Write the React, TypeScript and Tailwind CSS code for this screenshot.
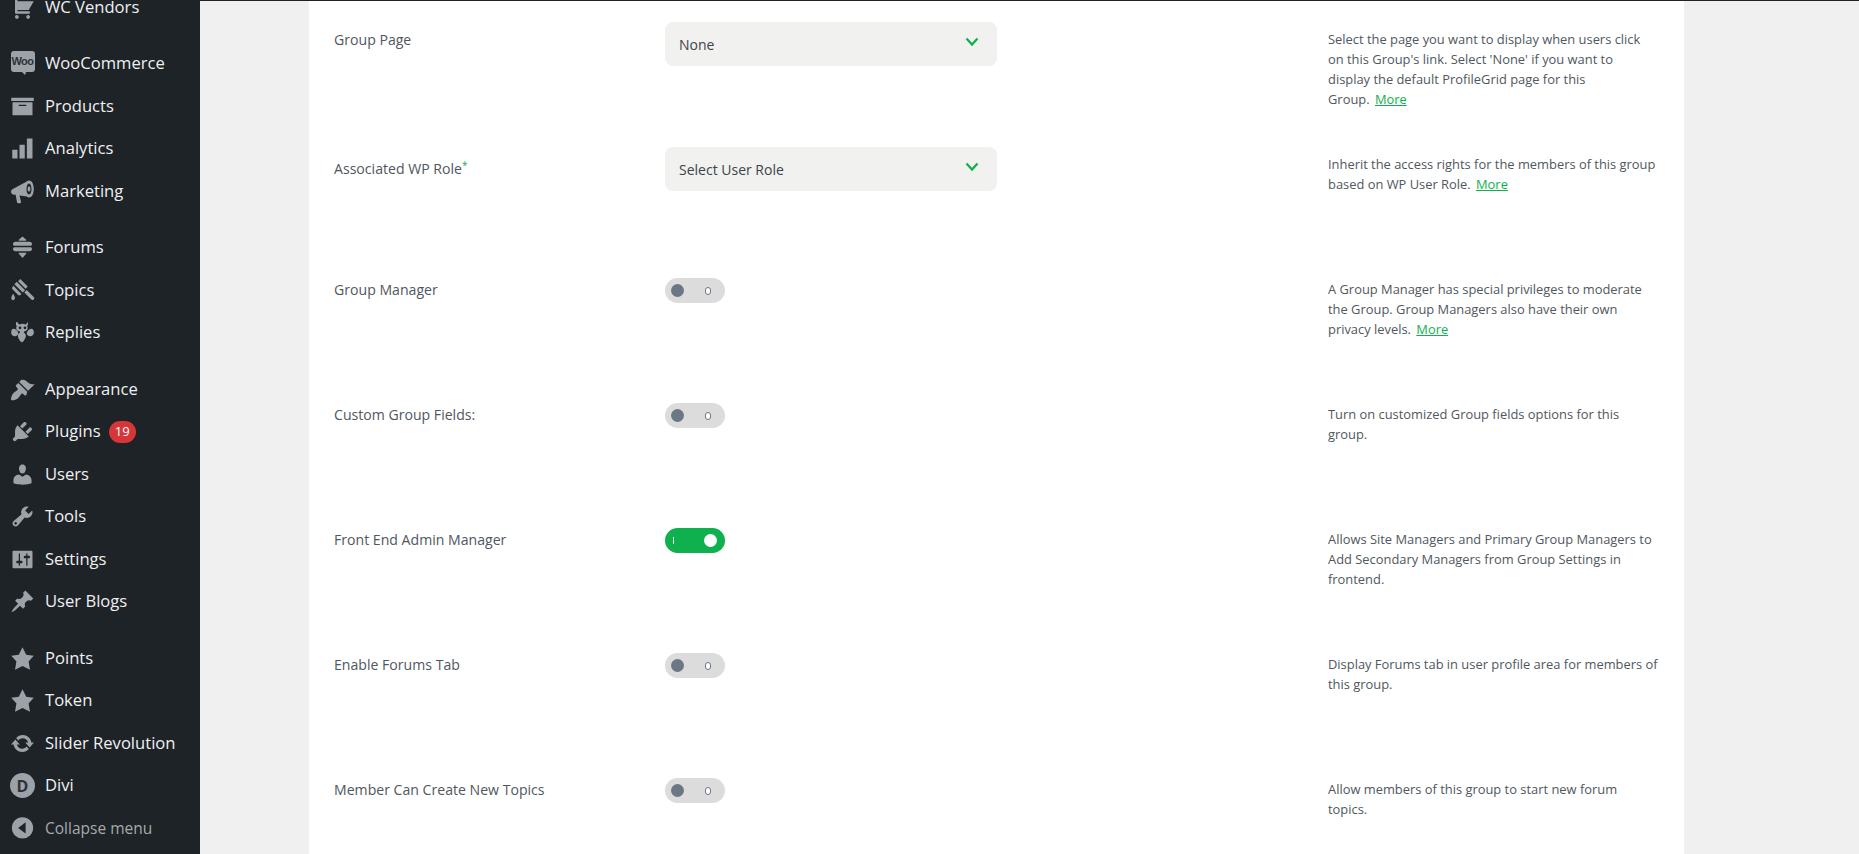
import React from "react";

const Ico = ({ d, rule }: { d: string; rule?: "evenodd" }) => (
  <svg viewBox="0 0 20 20" className="w-[25px] h-[25px] fill-[#9ca2a7]">
    <path d={d} fillRule={rule} clipRule={rule} />
  </svg>
);

const paths: Record<string, string> = {
  cart: "M6 13h9c.55 0 1 .45 1 1s-.45 1-1 1H5c-.55 0-1-.45-1-1V4H2c-.55 0-1-.45-1-1s.45-1 1-1h3c.55 0 1 .45 1 1v2h13l-4 7H6v1zm-.5 3c.83 0 1.5.67 1.5 1.5S6.33 19 5.5 19 4 18.33 4 17.5 4.67 16 5.5 16zm9 0c.83 0 1.5.67 1.5 1.500s-.67 1.500-1.500 1.500-1.500-.67-1.500-1.500.67-1.500 1.500-1.500z",
  archive: "M19 3v2.500H1V3h18zM2 6.500h16V17H2V6.500zm11 3V8.600H7v.9h6z",
  bars: "M18 18V2h-4.500v16H18zm-6.200 0V7H7.600v11h4.200zM6 18v-7H1.800v7H6z",
  mega: "M15.200 1.200c-.7 0-1.300.3-1.800.8L1.900 8.200C.9 8.800.7 10 1 11c.3 1 1.200 1.600 2.300 1.600h1.200l1.100 6c.1.500.5.700.9.700h1.500c.6 0 1-.5.8-1.100l-1.200-5 5.800.8c.5.500 1.100.7 1.800.7 2.200 0 3.800-2.800 3.800-6.800s-1.600-6.700-3.800-6.700zm0 2.300c1.200 0 2 2 2 4.400s-.8 4.400-2 4.400-2-2-2-4.400.8-4.400 2-4.400zm0 2.300c-.7 0-1.100 1-1.100 2.100s.4 2.100 1.100 2.100 1.100-1 1.100-2.100-.4-2.100-1.100-2.100z",
  forums: "M10 1.200l3 2.600c.2.300 0 .7-.4.700H7.400c-.4 0-.6-.4-.4-.7zM4.300 5.300h11.400c1.100 0 1.900.8 1.900 1.800 0 .7-.4 1.300-1 1.500H3.400c-.6-.2-1-.8-1-1.500 0-1 .8-1.800 1.900-1.800zM3.300 9.800h13.400c.5.300.9.800.9 1.400 0 1-.8 1.800-1.900 1.800H4.300c-1.100 0-1.900-.8-1.900-1.800 0-.6.4-1.100.9-1.400zM7.400 14.200h5.200c.4 0 .6.400.4.700l-3 3.400-3-3.400c-.2-.3 0-.7.400-.7z",
  topics: "M8.200.8l6 6-1.700 1.700-6-6zM5.400 3l6.700 6.700-1.900 1.900-6.700-6.700zM2.700 6.200l6.500 6.500-.9.9c-.5.500-1.300.5-1.800 0L2 8.900c-.5-.5-.5-1.300 0-1.800zM11.400 11.600l2-2 5.600 5.600c.6.600.6 1.400.1 1.900l-.1.100c-.5.500-1.300.5-1.900-.1zM2.500 12.500c.7 1.200 1.500 2.300 1.500 3.500 0 1-.7 1.700-1.500 1.700S1 17 1 16c0-1.200.8-2.300 1.500-3.500z",
  bee: "M5.800 1.500c.5 1 1.100 1.600 1.800 2 .7-.4 1.500-.6 2.400-.6s1.700.2 2.400.6c.7-.4 1.300-1 1.800-2 .4 1.300.2 2.400-.5 3.400.3.500.5 1 .5 1.500 0 1.300-1.200 2.400-3 2.800l-.1.700h-.1c1.100.8 1.700 1.600 1.700 2.700 0 1.900-2 4.900-3.200 5.200-1.200-.3-3.200-3.300-3.200-5.200 0-1.100.6-1.900 1.700-2.700l-.1-.7c-1.800-.4-3-1.500-3-2.800 0-.5.200-1 .5-1.500-.7-1-.9-2.100-.4-3.400zM8 5.100a1.100 1.100 0 1 0 0 2.200 1.100 1.100 0 0 0 0-2.200zm4 0a1.100 1.100 0 1 0 0 2.200 1.100 1.100 0 0 0 0-2.200zM2.900 7c1.300 0 2.200.7 3.100 2 .5.700.6 1.400.6 2.200-.5 1-1.300 1.600-2.400 1.800-1.700.2-3.300-1-3.300-3 0-1.700.7-3 2-3zm14.200 0c1.300 0 2 1.300 2 3 0 2-1.600 3.200-3.300 3-1.100-.2-1.900-.8-2.400-1.800 0-.8.100-1.500.6-2.200.9-1.300 1.800-2 3.100-2z",
  brush: "M14.480 11.060L7.410 3.990l1.500-1.500c.5-.56 2.300-.47 3.510.32 1.210.8 1.430 1.280 2.910 2.100 1.180.64 2.450 1.260 4.450.85zm-.71.71L6.700 4.700 4.930 6.470c-.39.39-.39 1.020 0 1.410l1.060 1.060c.39.390.39 1.030 0 1.420-.6.6-1.430 1.110-2.210 1.690-.35.260-.7.530-1.010.840-1.340 1.340-2.370 4.960-1.750 5.580.61.62 4.240-.41 5.580-1.750.310-.310.580-.660.840-1.010.580-.780 1.090-1.610 1.690-2.210.390-.390 1.020-.390 1.410 0l1.060 1.060c.39.390 1.020.390 1.410 0z",
  plug: "M13.110 4.360L9.870 7.600 8 5.730l3.240-3.240c.35-.34 1.050-.2 1.560.32.520.51.660 1.210.310 1.550zm-8 1.770l.91-1.120 9.010 9.010-1.190.84c-.71.71-2.630 1.160-3.820 1.160H6.140L4.900 17.260c-.59.59-1.540.59-2.120 0-.59-.58-.59-1.530 0-2.120l1.240-1.240v-3.880c0-1.130.4-3.190 1.090-3.890zm7.260 3.970l3.240-3.240c.34-.35 1.040-.21 1.550.31.520.51.660 1.210.310 1.550l-3.240 3.250z",
  user: "M10 9.250c-2.270 0-2.730-3.440-2.730-3.440C7 4.020 7.820 2 9.970 2c2.160 0 2.980 2.020 2.710 3.810 0 0-.41 3.440-2.680 3.440zm0 2.570L12.720 10c2.390 0 4.520 2.330 4.520 4.530v2.490s-3.650 1.130-7.240 1.130c-3.650 0-7.240-1.130-7.240-1.130v-2.490c0-2.250 1.940-4.480 4.470-4.480z",
  tools: "M16.680 9.770c-1.340 1.340-3.300 1.670-4.950.99l-5.410 6.520c-.99.99-2.590.99-3.580 0s-.99-2.590 0-3.570l6.520-5.420c-.68-1.650-.35-3.610.99-4.950 1.280-1.280 3.120-1.620 4.720-1.060l-2.890 2.890 2.820 2.820 2.860-2.870c.53 1.580.18 3.390-1.080 4.650zM3.810 16.210c.4.39 1.040.39 1.430 0 .4-.4.4-1.040 0-1.430-.39-.4-1.030-.4-1.430 0-.39.39-.39 1.030 0 1.430z",
  settings: "M18 16V4c0-.55-.45-1-1-1H3c-.55 0-1 .45-1 1v12c0 .55.45 1 1 1h14c.55 0 1-.45 1-1zM8 11h1c.55 0 1 .45 1 1s-.45 1-1 1H8v1.500c0 .28-.22.5-.5.5s-.5-.22-.5-.5V13H6c-.55 0-1-.45-1-1s.45-1 1-1h1V5.500c0-.28.22-.5.5-.5s.5.22.5.5V11zm5-2h-1c-.55 0-1-.45-1-1s.45-1 1-1h1V5.500c0-.28.22-.5.5-.5s.5.22.5.5V7h1c.55 0 1 .45 1 1s-.45 1-1 1h-1v5.500c0 .28-.22.5-.5.5s-.5-.22-.5-.5V9z",
  pin: "M10.440 3.020l1.820-1.820 6.360 6.350-1.830 1.820c-1.050-.68-2.480-.57-3.410.36l-.75.75c-.92.93-1.040 2.350-.35 3.410l-1.830 1.820-2.410-2.410-2.800 2.790c-.42.42-3.380 2.710-3.800 2.290s1.860-3.390 2.280-3.810l2.790-2.790L4.100 9.360l1.830-1.820c1.050.69 2.480.57 3.400-.36l.75-.75c.93-.92 1.050-2.350.36-3.410z",
  star: "M10 1l3 6 6 .75-4.120 4.620L16 19l-6-3-6 3 1.130-6.630L1 7.750 7 7z",
  update: "M10.200 3.280c3.530 0 6.430 2.610 6.920 6h2.080l-3.500 4-3.500-4h2.320c-.45-1.970-2.210-3.450-4.320-3.450-1.450 0-2.730.71-3.540 1.780L4.950 5.660C6.230 4.200 8.110 3.280 10.200 3.280zm-.4 13.440c-3.520 0-6.430-2.610-6.920-6H.8l3.500-4c1.170 1.330 2.330 2.670 3.500 4H5.480c.45 1.970 2.210 3.450 4.320 3.450 1.450 0 2.730-.71 3.540-1.780l1.710 1.950c-1.280 1.460-3.150 2.380-5.250 2.380z",
  collapse: "M10 1a8.500 8.500 0 1 0 0 17 8.500 8.500 0 0 0 0-17zm2.500 4v9l-6-4.500z",
};

const WooIcon = () => (
  <div className="relative w-[25px] h-[25px] flex items-start justify-center">
    <div className="w-[24px] h-[21px] rounded-[3px] bg-[#9ca2a7] flex items-center justify-center text-[11px] leading-none font-bold text-[#2c3338] font-['Liberation_Sans',sans-serif] tracking-[-0.5px]">
      Woo
    </div>
    <div className="absolute left-[12px] top-[21px] w-0 h-0 border-l-[3px] border-r-[1px] border-t-[3px] border-l-transparent border-r-transparent border-t-[#9ca2a7]" />
  </div>
);

const DiviIcon = () => (
  <div className="w-[25px] h-[25px] rounded-full bg-[#9ca2a7] flex items-center justify-center text-[16px] font-bold leading-none text-[#2c3338]">
    D
  </div>
);

type Item = { label: string; icon: React.ReactNode; gap?: boolean; badge?: string };

const items: Item[] = [
  { label: "WC Vendors", icon: <Ico d={paths.cart} /> },
  { label: "WooCommerce", icon: <WooIcon />, gap: true },
  { label: "Products", icon: <Ico d={paths.archive} /> },
  { label: "Analytics", icon: <Ico d={paths.bars} /> },
  { label: "Marketing", icon: <Ico d={paths.mega} rule="evenodd" /> },
  { label: "Forums", icon: <Ico d={paths.forums} />, gap: true },
  { label: "Topics", icon: <Ico d={paths.topics} /> },
  { label: "Replies", icon: <Ico d={paths.bee} rule="evenodd" /> },
  { label: "Appearance", icon: <Ico d={paths.brush} />, gap: true },
  { label: "Plugins", icon: <Ico d={paths.plug} />, badge: "19" },
  { label: "Users", icon: <Ico d={paths.user} /> },
  { label: "Tools", icon: <Ico d={paths.tools} /> },
  { label: "Settings", icon: <Ico d={paths.settings} /> },
  { label: "User Blogs", icon: <Ico d={paths.pin} /> },
  { label: "Points", icon: <Ico d={paths.star} />, gap: true },
  { label: "Token", icon: <Ico d={paths.star} /> },
  { label: "Slider Revolution", icon: <Ico d={paths.update} /> },
  { label: "Divi", icon: <DiviIcon /> },
];

const Chevron = () => (
  <svg viewBox="0 0 14 10" className="w-[14px] h-[10px]" fill="none" stroke="#0eb14d" strokeWidth="2.2">
    <path d="M1.500 1.500L7 7.500l5.500-6" />
  </svg>
);

const Select = ({ text, textClass }: { text: string; textClass: string }) => (
  <div className="w-[332px] h-[44px] mt-[21px] rounded-lg bg-[#f1f1ef] flex items-start justify-between pl-[14px] pr-[18px]">
    <span className={`text-[14px] leading-[20px] text-[#3c434a] ${textClass}`}>{text}</span>
    <span className="mt-[15px]">
      <Chevron />
    </span>
  </div>
);

const Toggle = ({ on }: { on?: boolean }) =>
  on ? (
    <div className="w-[60px] h-[25px] mt-[27px] rounded-full bg-[#0eb14d] flex items-center justify-between pl-[8px] pr-[8px]">
      <span className="w-[1px] h-[7px] bg-white" />
      <span className="w-[13px] h-[13px] rounded-full bg-white" />
    </div>
  ) : (
    <div className="w-[60px] h-[25px] mt-[27px] rounded-full bg-[#dcdcdc] flex items-center justify-between pl-[6px] pr-[14px]">
      <span className="w-[13px] h-[13px] rounded-full bg-[#6b7785]" />
      <span className="w-[6px] h-[8px] rounded-full bg-white border border-[#6b7785]" />
    </div>
  );

const More = () => <a className="ml-[2px] text-[#0eb14d] underline">More</a>;

const Row = ({
  label,
  control,
  children,
  labelClass = "pt-[29px]",
}: {
  label: React.ReactNode;
  control: React.ReactNode;
  children: React.ReactNode;
  labelClass?: string;
}) => (
  <div className="flex h-[125px]">
    <div className={`w-[331px] shrink-0 text-[14.100px] leading-[20px] text-[#50575e] ${labelClass}`}>{label}</div>
    <div className="w-[663px] shrink-0">{control}</div>
    <div className="flex-1 pt-[28px] text-[12.900px] leading-[20px] text-[#50575e] whitespace-nowrap">{children}</div>
  </div>
);

export default function App() {
  return (
    <div className="w-[1859px] h-[854px] overflow-hidden flex bg-[#f0f0f1] font-['Open_Sans',sans-serif]">
      <aside className="w-[200px] h-full shrink-0 bg-[#1d2327] overflow-hidden">
        <div className="mt-[-14px] flex flex-col">
          {items.map((it) => (
            <div
              key={it.label}
              className={`h-[42.5px] shrink-0 flex items-center gap-[10px] pl-[10px] ${it.gap ? "mt-[14px]" : ""}`}
            >
              {it.icon}
              <span className="text-[16.600px] text-[#f0f0f1] whitespace-nowrap">{it.label}</span>
              {it.badge && (
                <span className="ml-[-2px] w-[27px] h-[22px] rounded-full bg-[#d63638] text-white text-[13px] flex items-center justify-center">
                  {it.badge}
                </span>
              )}
            </div>
          ))}
          <div className="h-[42.5px] shrink-0 flex items-center gap-[10px] pl-[10px]">
            <Ico d={paths.collapse} rule="evenodd" />
            <span className="text-[15.500px] text-[#a7aaad] whitespace-nowrap">Collapse menu</span>
          </div>
        </div>
      </aside>
      <main className="flex-1 border-t border-[#1d2327] pl-[109px] pr-[175px]">
        <div className="h-full bg-white pl-[25px]">
          <Row label="Group Page" control={<Select text="None" textClass="mt-[13px]" />}>
            Select the page you want to display when users click
            <br />
            on this Group's link. Select 'None' if you want to
            <br />
            display the default ProfileGrid page for this
            <br />
            Group. <More />
          </Row>
          <Row
            labelClass="pt-[33px]"
            label={
              <>
                Associated WP Role<sup className="text-[#0eb14d] text-[10px]">*</sup>
              </>
            }
            control={<Select text="Select User Role" textClass="mt-[13px]" />}
          >
            Inherit the access rights for the members of this group
            <br />
            based on WP User Role. <More />
          </Row>
          <Row label="Group Manager" control={<Toggle />}>
            A Group Manager has special privileges to moderate
            <br />
            the Group. Group Managers also have their own
            <br />
            privacy levels. <More />
          </Row>
          <Row label="Custom Group Fields:" control={<Toggle />}>
            Turn on customized Group fields options for this
            <br />
            group.
          </Row>
          <Row label="Front End Admin Manager" control={<Toggle on />}>
            Allows Site Managers and Primary Group Managers to
            <br />
            Add Secondary Managers from Group Settings in
            <br />
            frontend.
          </Row>
          <Row label="Enable Forums Tab" control={<Toggle />}>
            Display Forums tab in user profile area for members of
            <br />
            this group.
          </Row>
          <Row label="Member Can Create New Topics" control={<Toggle />}>
            Allow members of this group to start new forum
            <br />
            topics.
          </Row>
        </div>
      </main>
    </div>
  );
}
